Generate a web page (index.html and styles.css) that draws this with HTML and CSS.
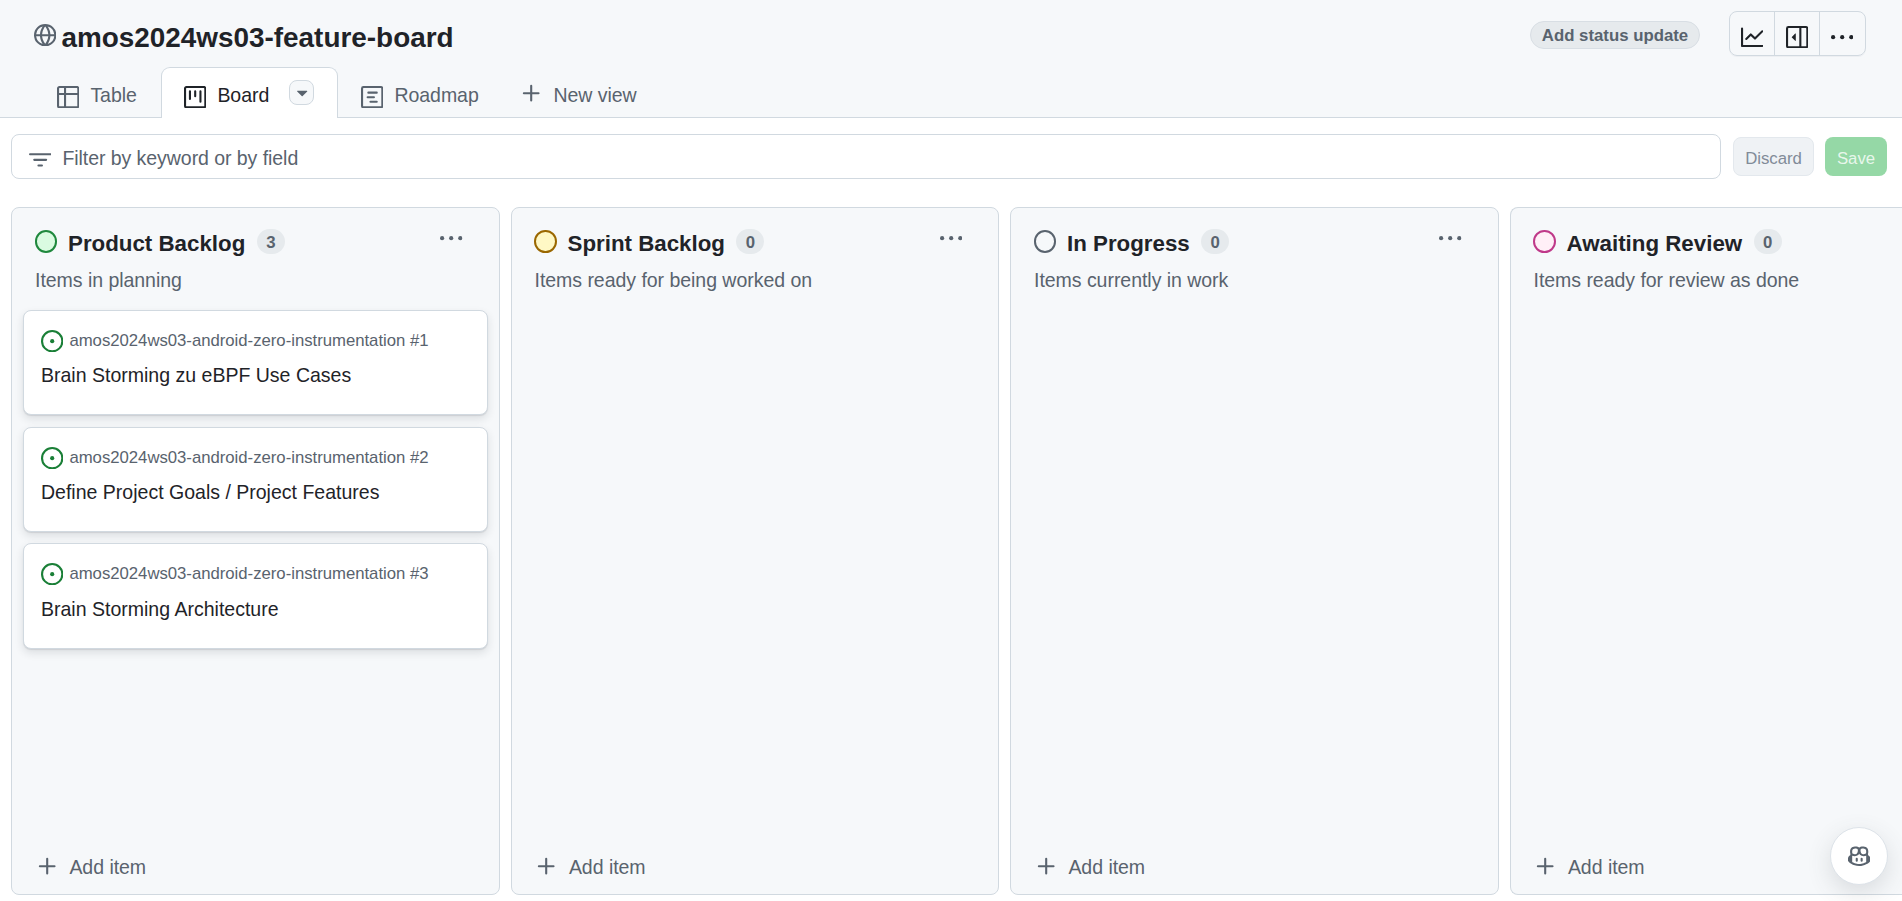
FILE: index.html
```
<!DOCTYPE html>
<html lang="en">
<head>
<meta charset="utf-8">
<title>amos2024ws03-feature-board</title>
<link rel="stylesheet" href="styles.css">
</head>
<body>
<svg class="defs" aria-hidden="true">
  <symbol id="globe" viewBox="0 0 16 16"><path d="M8 0a8 8 0 1 1 0 16A8 8 0 0 1 8 0ZM5.78 8.75a9.64 9.64 0 0 0 1.363 4.177c.255.426.542.832.857 1.215.245-.296.551-.705.857-1.215A9.64 9.64 0 0 0 10.22 8.75Zm4.44-1.5a9.64 9.64 0 0 0-1.363-4.177c-.307-.51-.612-.919-.857-1.215a9.927 9.927 0 0 0-.857 1.215A9.64 9.64 0 0 0 5.78 7.25Zm-5.944 1.5H1.543a6.507 6.507 0 0 0 4.666 5.5c-.123-.181-.24-.365-.352-.552-.715-1.192-1.437-2.874-1.581-4.948Zm-2.733-1.5h2.733c.144-2.074.866-3.756 1.58-4.948.12-.197.237-.381.353-.552a6.507 6.507 0 0 0-4.666 5.5Zm10.181 1.5c-.144 2.074-.866 3.756-1.58 4.948-.12.197-.237.381-.353.552a6.507 6.507 0 0 0 4.666-5.5Zm2.733-1.5a6.507 6.507 0 0 0-4.666-5.5c.123.181.24.365.353.552.714 1.192 1.436 2.874 1.58 4.948Z"/></symbol>
  <symbol id="table" viewBox="0 0 16 16"><path d="M0 1.75C0 .784.784 0 1.75 0h12.5C15.216 0 16 .784 16 1.75v12.5A1.75 1.75 0 0 1 14.25 16H1.75A1.75 1.75 0 0 1 0 14.25ZM6.5 6.5v8h7.75a.25.25 0 0 0 .25-.25V6.5Zm8-1.5V1.75a.25.25 0 0 0-.25-.25H6.5V5Zm-13 1.5v7.75c0 .138.112.25.25.25H5v-8ZM5 5V1.5H1.75a.25.25 0 0 0-.25.25V5Z"/></symbol>
  <symbol id="project" viewBox="0 0 16 16"><path d="M1.75 0h12.5C15.216 0 16 .784 16 1.75v12.5A1.75 1.75 0 0 1 14.25 16H1.75A1.75 1.75 0 0 1 0 14.25V1.75C0 .784.784 0 1.75 0ZM1.5 1.75v12.5c0 .138.112.25.25.25h12.5a.25.25 0 0 0 .25-.25V1.75a.25.25 0 0 0-.25-.25H1.75a.25.25 0 0 0-.25.25ZM11.75 3a.75.75 0 0 1 .75.75v7.5a.75.75 0 0 1-1.5 0v-7.5a.75.75 0 0 1 .75-.75Zm-8.25.75a.75.75 0 0 1 1.5 0v5.5a.75.75 0 0 1-1.5 0ZM8 3a.75.75 0 0 1 .75.75v3.5a.75.75 0 0 1-1.5 0v-3.5A.75.75 0 0 1 8 3Z"/></symbol>
  <symbol id="roadmap" viewBox="0 0 16 16"><g fill="none" stroke="currentColor" stroke-width="1.5" stroke-linecap="round"><rect x=".75" y=".75" width="14.5" height="14.5" rx="1"/><path d="M5.25 4.75h6M4.75 8h4.5M6.75 11.25h4.5"/></g></symbol>
  <symbol id="plus" viewBox="0 0 16 16"><path d="M8 2.75v10.5M2.75 8h10.5" fill="none" stroke="currentColor" stroke-width="1.5" stroke-linecap="round"/></symbol>
  <symbol id="caret" viewBox="0 0 16 16"><path d="m4.427 7.427 3.396 3.396a.25.25 0 0 0 .354 0l3.396-3.396A.25.25 0 0 0 11.396 7H4.604a.25.25 0 0 0-.177.427Z"/></symbol>
  <symbol id="filter" viewBox="0 0 16 16"><path d="M.75 3.75h14.5M3.75 7.75h8.5M6.75 11.75h2.5" fill="none" stroke="currentColor" stroke-width="1.5" stroke-linecap="round"/></symbol>
  <symbol id="graph" viewBox="0 0 16 16"><path d="M1.5 1.75a.75.75 0 0 0-1.5 0v12.5c0 .414.336.75.75.75h14.5a.75.75 0 0 0 0-1.5H1.5Zm14.28 2.53a.751.751 0 0 0-1.06-1.06L10 7.94 7.53 5.47a.75.75 0 0 0-1.06 0L3.22 8.72a.751.751 0 0 0 1.06 1.06L7 7.06l2.47 2.47a.75.75 0 0 0 1.06 0Z"/></symbol>
  <symbol id="sidebar" viewBox="0 0 16 16"><g fill="none" stroke="currentColor" stroke-width="1.5"><rect x=".75" y=".75" width="14.5" height="14.5" rx="1"/><path d="M10.25 1v14"/></g><path d="m4.177 7.823 2.396-2.396A.25.25 0 0 1 7 5.604v4.792a.25.25 0 0 1-.427.177L4.177 8.177a.25.25 0 0 1 0-.354Z"/></symbol>
  <symbol id="kebab" viewBox="0 0 16 16"><circle cx="1.5" cy="8" r="1.5"/><circle cx="8" cy="8" r="1.5"/><circle cx="14.5" cy="8" r="1.5"/></symbol>
  <symbol id="issue" viewBox="0 0 16 16"><circle cx="8" cy="8" r="7.25" fill="none" stroke="currentColor" stroke-width="1.5"/><circle cx="8" cy="8" r="1.5"/></symbol>
  <symbol id="copilot" viewBox="0 0 16 16"><path fill-rule="evenodd" d="M7.998 15.035c-4.562 0-7.873-2.914-7.998-3.749V9.338c.085-.628.677-1.686 1.588-2.065.013-.07.024-.143.036-.218.029-.183.06-.384.126-.612-.201-.508-.254-1.084-.254-1.656 0-.87.128-1.769.693-2.484.579-.733 1.494-1.124 2.724-1.261 1.206-.134 2.262.034 2.944.765.05.053.096.108.139.165.044-.057.094-.112.143-.165.682-.731 1.738-.899 2.944-.765 1.23.137 2.145.528 2.724 1.261.566.715.693 1.614.693 2.484 0 .572-.053 1.148-.254 1.656.066.228.098.429.126.612.012.076.024.148.037.218.924.385 1.522 1.471 1.591 2.095v1.872c0 .766-3.351 3.795-8.002 3.795Zm0-1.485c2.28 0 4.584-1.11 5.002-1.433V7.862l-.023-.116c-.49.21-1.075.291-1.727.291-1.146 0-2.059-.327-2.71-.991A3.222 3.222 0 0 1 8 6.303a3.24 3.24 0 0 1-.544.743c-.65.664-1.563.991-2.71.991-.652 0-1.236-.081-1.727-.291l-.023.116v4.255c.419.323 2.722 1.433 5.002 1.433ZM6.762 2.83c-.193-.206-.637-.413-1.682-.297-1.019.113-1.479.404-1.713.7-.247.312-.369.789-.369 1.554 0 .793.129 1.171.308 1.371.162.181.519.379 1.442.379.853 0 1.339-.235 1.638-.54.315-.322.527-.827.617-1.553.117-.935-.037-1.395-.241-1.614Zm4.155-.297c-1.044-.116-1.488.091-1.681.297-.204.219-.359.679-.242 1.614.091.726.303 1.231.618 1.553.299.305.784.54 1.638.54.922 0 1.28-.198 1.442-.379.179-.2.308-.578.308-1.371 0-.765-.123-1.242-.37-1.554-.233-.296-.693-.587-1.713-.7Z"/><path d="M6.25 9.037a.75.75 0 0 1 .75.75v1.501a.75.75 0 0 1-1.5 0V9.787a.75.75 0 0 1 .75-.75Zm4.25.75v1.501a.75.75 0 0 1-1.5 0V9.787a.75.75 0 0 1 1.5 0Z"/></symbol>
</svg>

<header class="header">
  <div class="title-row">
    <svg class="icon globe"><use href="#globe"/></svg>
    <h1 class="title">amos2024ws03-feature-board</h1>
    <button class="status">Add status update</button>
    <div class="group">
      <button class="group-btn"><svg class="icon"><use href="#graph"/></svg></button>
      <button class="group-btn"><svg class="icon"><use href="#sidebar"/></svg></button>
      <button class="group-btn"><svg class="icon"><use href="#kebab"/></svg></button>
    </div>
  </div>
  <nav class="tabs">
    <a class="tab tab-table"><svg class="icon"><use href="#table"/></svg><span>Table</span></a>
    <a class="tab tab-active"><svg class="icon"><use href="#project"/></svg><span>Board</span><span class="caret"><svg class="icon"><use href="#caret"/></svg></span></a>
    <a class="tab tab-roadmap"><svg class="icon"><use href="#roadmap"/></svg><span>Roadmap</span></a>
    <a class="tab tab-new"><svg class="icon"><use href="#plus"/></svg><span>New view</span></a>
  </nav>
</header>

<div class="toolbar">
  <div class="filter"><svg class="icon"><use href="#filter"/></svg><span>Filter by keyword or by field</span></div>
  <button class="btn discard">Discard</button>
  <button class="btn save">Save</button>
</div>

<main class="board">
  <section class="column">
    <div class="col-head"><i class="dot green"></i><h2 class="col-title">Product Backlog</h2><span class="count">3</span><svg class="icon more"><use href="#kebab"/></svg></div>
    <p class="desc">Items in planning</p>
    <div class="cards">
      <article class="card"><div class="repo"><svg class="icon"><use href="#issue"/></svg><span>amos2024ws03-android-zero-instrumentation #1</span></div><h3 class="card-title">Brain Storming zu eBPF Use Cases</h3></article>
      <article class="card"><div class="repo"><svg class="icon"><use href="#issue"/></svg><span>amos2024ws03-android-zero-instrumentation #2</span></div><h3 class="card-title">Define Project Goals / Project Features</h3></article>
      <article class="card"><div class="repo"><svg class="icon"><use href="#issue"/></svg><span>amos2024ws03-android-zero-instrumentation #3</span></div><h3 class="card-title">Brain Storming Architecture</h3></article>
    </div>
    <button class="add"><svg class="icon"><use href="#plus"/></svg><span>Add item</span></button>
  </section>
  <section class="column">
    <div class="col-head"><i class="dot yellow"></i><h2 class="col-title">Sprint Backlog</h2><span class="count">0</span><svg class="icon more"><use href="#kebab"/></svg></div>
    <p class="desc">Items ready for being worked on</p>
    <button class="add"><svg class="icon"><use href="#plus"/></svg><span>Add item</span></button>
  </section>
  <section class="column">
    <div class="col-head"><i class="dot gray"></i><h2 class="col-title">In Progress</h2><span class="count">0</span><svg class="icon more"><use href="#kebab"/></svg></div>
    <p class="desc">Items currently in work</p>
    <button class="add"><svg class="icon"><use href="#plus"/></svg><span>Add item</span></button>
  </section>
  <section class="column column-cut">
    <div class="col-head"><i class="dot pink"></i><h2 class="col-title">Awaiting Review</h2><span class="count">0</span></div>
    <p class="desc">Items ready for review as done</p>
    <button class="add"><svg class="icon"><use href="#plus"/></svg><span>Add item</span></button>
  </section>
</main>
<button class="copilot"><svg class="icon"><use href="#copilot"/></svg></button>
</body>
</html>
```
FILE: styles.css
```
* { box-sizing: border-box; }
body {
  margin: 0;
  height: 901px;
  overflow: hidden;
  display: flex;
  flex-direction: column;
  background: #fff;
  color: #1f2328;
  font: 19.53px/28px "Liberation Sans", Arial, sans-serif;
  letter-spacing: -0.04px;
}
h1, h2, h3, p { margin: 0; letter-spacing: 0; }
button { font: inherit; margin: 0; padding: 0; border: 0; background: none; color: inherit; letter-spacing: inherit; }
.defs { display: none; }
.icon { width: 22.4px; height: 22.4px; flex: none; display: block; fill: currentColor; }

.header {
  height: 118px;
  flex: none;
  background: #f6f8fa;
  border-bottom: 1px solid #d1d9e0;
  display: flex;
  flex-direction: column;
  justify-content: space-between;
}
.title-row { display: flex; height: 67px; padding: 11px 36px 0 34px; }
.globe { margin-top: 13px; color: #59636e; }
.title { margin: 7px auto 0 5px; font-size: 27.9px; line-height: 40px; font-weight: 700; }
.status {
  height: 28px;
  width: 170px;
  margin: 10px 29px 0 0;
  border: 1px solid #d8dee4;
  border-radius: 14px;
  background: #e6eaed;
  color: #59636e;
  font-size: 16.8px;
  line-height: 26px;
  padding-top: 1px;
  font-weight: 700;
  letter-spacing: 0;
}
.group {
  display: flex;
  width: 137px;
  height: 45px;
  border: 1px solid #d1d9e0;
  border-radius: 8px;
  box-shadow: 0 1px 0 rgba(31, 35, 40, .04);
}
.group-btn { width: 45px; display: flex; justify-content: center; padding-top: 14px; }
.group-btn:first-child { width: 44px; }
.group-btn + .group-btn { border-left: 1px solid #d1d9e0; }

.tabs { display: flex; height: 51px; margin-bottom: -1px; padding-left: 57px; color: #59636e; }
.tab { display: flex; align-items: flex-start; gap: 11px; padding-top: 19px; line-height: 20px; }
.tab span { margin-top: -1px; }
.tab-table { width: 104px; }
.tab-active {
  width: 177px;
  padding: 18px 0 0 22px;
  border: 1px solid #d1d9e0;
  border-bottom: 0;
  border-radius: 9px 9px 0 0;
  background: #fff;
  color: #1f2328;
}
.tab .caret {
  display: flex;
  align-items: center;
  justify-content: center;
  width: 25px;
  height: 25px;
  margin: -6px 0 0 9px;
  border: 1px solid #d1d9e0;
  border-radius: 8px;
  background: #f6f8fa;
  color: #59636e;
}
.tab-roadmap { padding-left: 23px; width: 182px; }
.tab-new .icon { margin-top: -4px; }

.toolbar { display: flex; flex: none; padding: 16px 15px 0 11px; height: 61px; }
.filter {
  flex: 1;
  height: 45px;
  display: flex;
  gap: 11px;
  padding: 9px 0 0 17px;
  margin-right: 12px;
  border: 1px solid #d1d9e0;
  border-radius: 8px;
  color: #59636e;
  letter-spacing: -0.06px;
}
.filter .icon { margin-top: 5px; }
.btn { height: 39px; margin-top: 3px; border-radius: 8px; font-size: 16.8px; line-height: 39px; padding-top: 1px; }
.discard { width: 81px; margin-right: 11px; background: #eff2f5; border: 1px solid #e3e8ed; color: #818b98; }
.save { width: 62px; padding-top: 2px; background: #95d8a6; color: rgba(255, 255, 255, .8); }

.board { display: flex; gap: 11px; padding: 28px 0 0 11px; }
.column {
  flex: none;
  display: flex;
  flex-direction: column;
  width: 488.5px;
  height: 688px;
  border: 1px solid #d1d9e0;
  border-radius: 8px;
  background: #f6f8fa;
}
.column-cut { flex: 1; width: auto; border-right: 0; border-radius: 8px 0 0 8px; }
.col-head { display: flex; height: 50px; padding: 22px 36px 0 22.5px; }
.dot { width: 22.5px; height: 23px; border: 2px solid; border-radius: 50%; flex: none; }
.green { background: #dafbe1; border-color: #1f883d; }
.yellow { background: #fff8c5; border-color: #9a6700; }
.gray { border-color: #59636e; }
.pink { background: #ffeff7; border-color: #bf3989; }
.col-title { margin: 0 11.5px 0 11px; font-size: 22.32px; line-height: 28px; font-weight: 700; }
.count {
  min-width: 28px;
  height: 25px;
  margin-top: -1px;
  border-radius: 13px;
  background: #e6eaed;
  color: #59636e;
  font-size: 16.8px;
  line-height: 27px;
  font-weight: 700;
  text-align: center;
}
.more { margin: -3px 0 0 auto; color: #59636e; }
.desc { padding: 8px 23px 0; color: #59636e; letter-spacing: -0.04px; }
.cards { display: flex; flex-direction: column; gap: 12px; padding: 16px 11px 0; }
.card {
  height: 105px;
  padding: 18px 17px 0;
  border: 1px solid #d1d9e0;
  border-radius: 8px;
  background: #fff;
  box-shadow: 0 1px 1px rgba(37, 41, 46, .1), 0 4px 8px rgba(37, 41, 46, .12);
}
.card:last-child { margin-top: -1px; height: 106px; }
.card:last-child .card-title { margin-top: 9px; }
.repo { display: flex; gap: 6px; height: 24px; font-size: 16.74px; line-height: 24px; color: #59636e; letter-spacing: -0.02px; }
.repo .icon { color: #1a7f37; margin-top: 1px; }
.card-title { margin-top: 8px; font-size: 19.53px; line-height: 28px; font-weight: 400; }
.add { display: flex; gap: 11.5px; margin: auto 0 13px 23.5px; color: #59636e; text-align: left; }
.add .icon { margin-top: 2px; }

.copilot {
  position: absolute;
  right: 14px;
  bottom: 16px;
  width: 58px;
  height: 58px;
  display: flex;
  align-items: center;
  justify-content: center;
  border: 1px solid #dde3e9;
  border-radius: 50%;
  background: #fff;
  color: #59636e;
  box-shadow: 0 8px 24px rgba(66, 74, 83, .16);
}
```
